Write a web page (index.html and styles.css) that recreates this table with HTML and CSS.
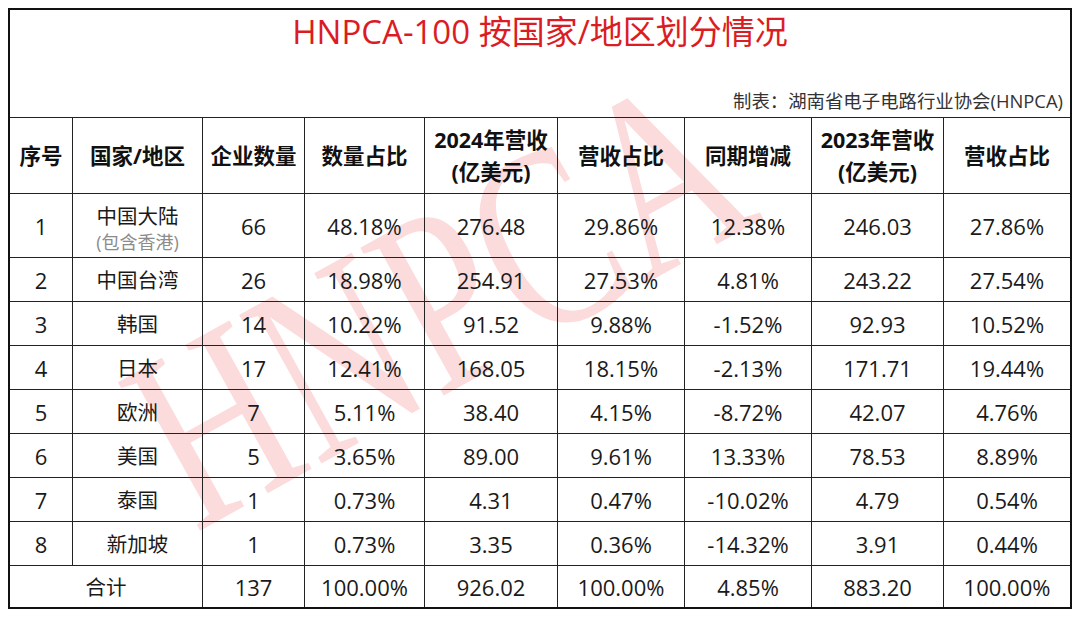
FILE: index.html
```html
<!DOCTYPE html>
<html lang="zh-CN">
<head>
<meta charset="utf-8">
<title>HNPCA-100 按国家/地区划分情况</title>
<link rel="stylesheet" href="styles.css">
</head>
<body>
<div class="sheet">
  <div class="watermark">HNPCA</div>
  <div class="grid">
    <div class="caption">
      <h1 class="title">HNPCA-100 按国家/地区划分情况</h1>
      <div class="maker">制表：湖南省电子电路行业协会(HNPCA)</div>
    </div>

    <div class="row head">
      <div class="cell">序号</div>
      <div class="cell">国家/地区</div>
      <div class="cell">企业数量</div>
      <div class="cell">数量占比</div>
      <div class="cell">2024年营收<br>(亿美元)</div>
      <div class="cell">营收占比</div>
      <div class="cell">同期增减</div>
      <div class="cell">2023年营收<br>(亿美元)</div>
      <div class="cell">营收占比</div>
    </div>

    <div class="row">
      <div class="cell">1</div>
      <div class="cell region"><span>中国大陆</span><span class="note">(包含香港)</span></div>
      <div class="cell">66</div>
      <div class="cell">48.18%</div>
      <div class="cell">276.48</div>
      <div class="cell">29.86%</div>
      <div class="cell">12.38%</div>
      <div class="cell">246.03</div>
      <div class="cell">27.86%</div>
    </div>
    <div class="row">
      <div class="cell">2</div>
      <div class="cell cn">中国台湾</div>
      <div class="cell">26</div>
      <div class="cell">18.98%</div>
      <div class="cell">254.91</div>
      <div class="cell">27.53%</div>
      <div class="cell">4.81%</div>
      <div class="cell">243.22</div>
      <div class="cell">27.54%</div>
    </div>
    <div class="row">
      <div class="cell">3</div>
      <div class="cell cn">韩国</div>
      <div class="cell">14</div>
      <div class="cell">10.22%</div>
      <div class="cell">91.52</div>
      <div class="cell">9.88%</div>
      <div class="cell">-1.52%</div>
      <div class="cell">92.93</div>
      <div class="cell">10.52%</div>
    </div>
    <div class="row">
      <div class="cell">4</div>
      <div class="cell cn">日本</div>
      <div class="cell">17</div>
      <div class="cell">12.41%</div>
      <div class="cell">168.05</div>
      <div class="cell">18.15%</div>
      <div class="cell">-2.13%</div>
      <div class="cell">171.71</div>
      <div class="cell">19.44%</div>
    </div>
    <div class="row">
      <div class="cell">5</div>
      <div class="cell cn">欧洲</div>
      <div class="cell">7</div>
      <div class="cell">5.11%</div>
      <div class="cell">38.40</div>
      <div class="cell">4.15%</div>
      <div class="cell">-8.72%</div>
      <div class="cell">42.07</div>
      <div class="cell">4.76%</div>
    </div>
    <div class="row">
      <div class="cell">6</div>
      <div class="cell cn">美国</div>
      <div class="cell">5</div>
      <div class="cell">3.65%</div>
      <div class="cell">89.00</div>
      <div class="cell">9.61%</div>
      <div class="cell">13.33%</div>
      <div class="cell">78.53</div>
      <div class="cell">8.89%</div>
    </div>
    <div class="row">
      <div class="cell">7</div>
      <div class="cell cn">泰国</div>
      <div class="cell">1</div>
      <div class="cell">0.73%</div>
      <div class="cell">4.31</div>
      <div class="cell">0.47%</div>
      <div class="cell">-10.02%</div>
      <div class="cell">4.79</div>
      <div class="cell">0.54%</div>
    </div>
    <div class="row">
      <div class="cell">8</div>
      <div class="cell cn">新加坡</div>
      <div class="cell">1</div>
      <div class="cell">0.73%</div>
      <div class="cell">3.35</div>
      <div class="cell">0.36%</div>
      <div class="cell">-14.32%</div>
      <div class="cell">3.91</div>
      <div class="cell">0.44%</div>
    </div>
    <div class="row total">
      <div class="cell cn span2">合计</div>
      <div class="cell">137</div>
      <div class="cell">100.00%</div>
      <div class="cell">926.02</div>
      <div class="cell">100.00%</div>
      <div class="cell">4.85%</div>
      <div class="cell">883.20</div>
      <div class="cell">100.00%</div>
    </div>
  </div>
</div>
</body>
</html>
```
FILE: styles.css
```css
html, body {
  margin: 0;
  padding: 0;
  background: #ffffff;
}

.sheet {
  position: relative;
  margin: 8px 0 0 8px;
  width: 1064px;
  height: 601px;
  box-sizing: border-box;
  border: 2px solid #111111;
  overflow: hidden;
  font-family: "Open Sans", "Noto Sans CJK SC", sans-serif;
  color: #1a1a1a;
  background: #ffffff;
}

.watermark {
  position: absolute;
  left: 428px;
  top: 290px;
  font-family: "Liberation Serif", "Times New Roman", serif;
  font-size: 192px;
  line-height: 1;
  white-space: nowrap;
  color: rgba(232, 40, 40, 0.17);
  transform: translate(-50%, -50%) rotate(-29deg) scaleY(1.35);
  z-index: 0;
  pointer-events: none;
}

.grid {
  position: relative;
  z-index: 1;
  display: grid;
  grid-template-columns: 63px 130px 102px 120px 133px 127px 127px 132px 126px;
  grid-template-rows: 108px 76px 64px repeat(7, 44px) 41px;
}

.caption {
  grid-column: 1 / -1;
  display: flex;
  flex-direction: column;
  border-bottom: 1px solid #222222;
}

.title {
  margin: 0;
  font-size: 33px;
  line-height: 44px;
  font-weight: 400;
  text-align: center;
  color: #db1c25;
}

.maker {
  margin-top: auto;
  padding: 0 7px 4px 0;
  font-size: 18.4px;
  line-height: 24px;
  text-align: right;
  color: #333333;
}

.row {
  display: contents;
}

.cell {
  display: flex;
  align-items: center;
  justify-content: center;
  text-align: center;
  border-right: 1px solid #222222;
  border-bottom: 1px solid #222222;
  font-size: 22px;
  line-height: 28px;
  white-space: nowrap;
}

.row .cell:last-child {
  border-right: none;
}

.row.total .cell {
  border-bottom: none;
}

.head .cell {
  font-family: "Open Sans", "Noto Sans CJK SC", sans-serif;
  font-size: 21.5px;
  font-weight: 700;
  line-height: 32px;
  color: #111111;
}

.cn {
  font-size: 20.5px;
}

.region {
  flex-direction: column;
  padding-top: 5px;
  box-sizing: border-box;
  font-size: 20.5px;
}

.region span {
  line-height: 27px;
}

.region .note {
  font-size: 18px;
  line-height: 24px;
  color: #8c8c8c;
}

.span2 {
  grid-column: span 2;
}
```
